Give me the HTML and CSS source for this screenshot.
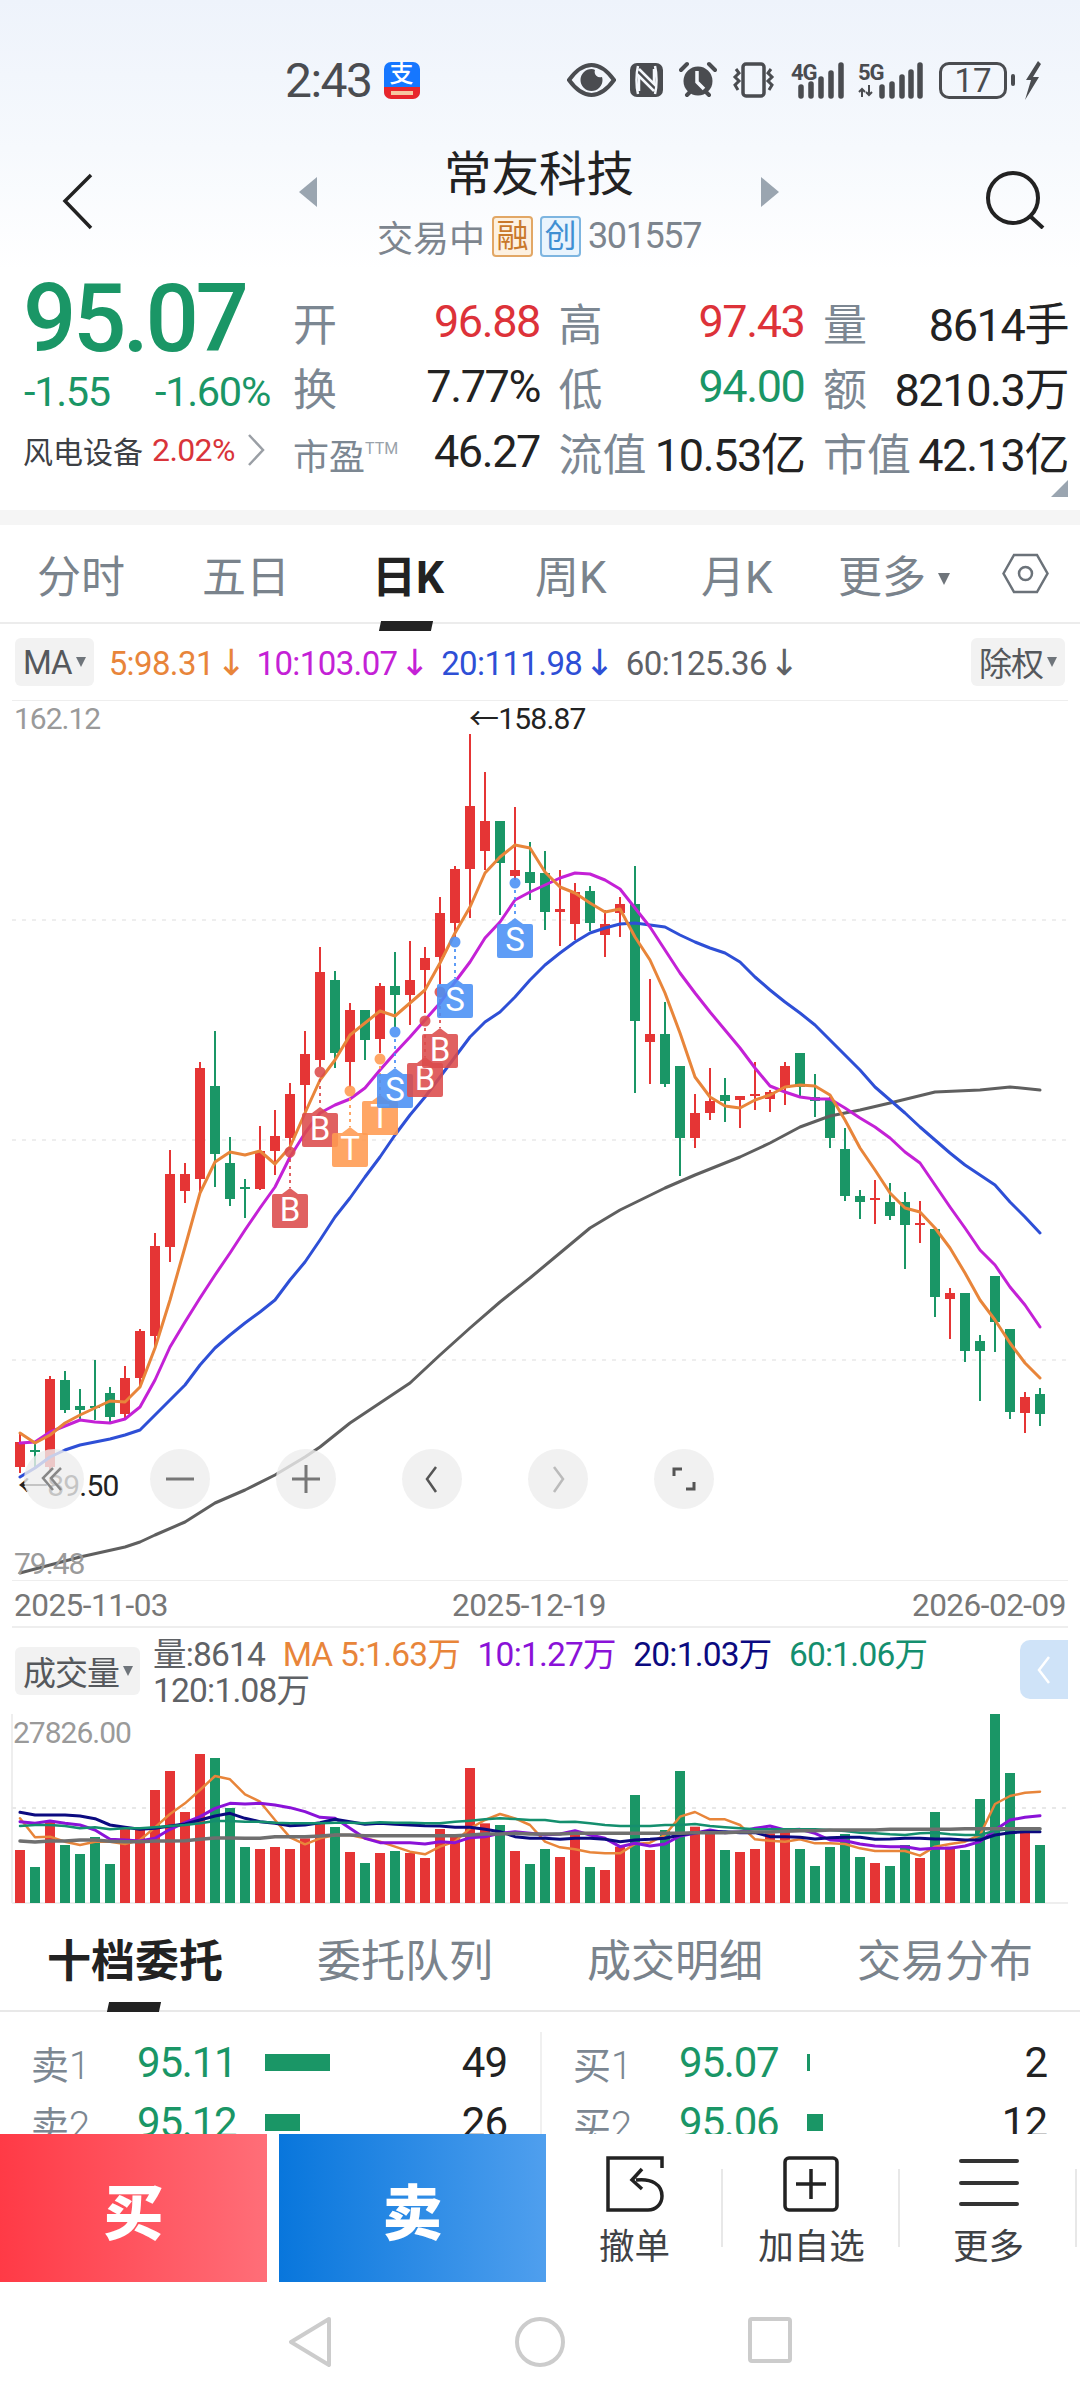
FILE: index.html
```html
<!DOCTYPE html>
<html lang="zh-CN">
<head>
  <meta charset="UTF-8">
  <title>常友科技 301557</title>
  <link rel="stylesheet" href="styles.css">
</head>
<body>

  <header class="top">
    <div class="status">
      <span class="clock">2:43</span>
      <span class="alipay"><b>支</b><i></i></span>
      <div class="status-icons">
        <svg width="49" height="34" viewBox="0 0 49 34"><path d="M2 17C10 6 17 2 24.500 2S39 6 47 17C39 28 32 32 24.500 32S10 28 2 17Z" fill="none" stroke="#4a4c50" stroke-width="4"/><path d="M24.500 6a11 11 0 1 0 11 11c0-1-.2-2-.5-3a5.500 5.500 0 0 1-7-7c-1-.7-2.300-1-3.500-1Z" fill="#4a4c50"/></svg>
        <svg class="ic-nfc" width="33" height="34" viewBox="0 0 33 34"><rect width="33" height="34" rx="7" fill="#4a4c50"/><path d="M8 3c-2 8-2 20 0 28M25 3c2 8 2 20 0 28M9 6l15 15V6M24 28L9 13v15" fill="none" stroke="#f4f7fc" stroke-width="2.500"/></svg>
        <svg class="ic-alarm" width="38" height="38" viewBox="0 0 38 38"><circle cx="19" cy="20" r="14.500" fill="#4a4c50"/><path d="M18 10v11l7 7" fill="none" stroke="#f4f7fc" stroke-width="3.500"/><path d="M2 9l6-6M36 9l-6-6M8 34l3-3M30 34l-3-3" stroke="#4a4c50" stroke-width="4" stroke-linecap="round"/></svg>
        <svg class="ic-vibrate" width="45" height="36" viewBox="0 0 45 36"><rect x="12" y="2" width="21" height="32" rx="3" fill="none" stroke="#4a4c50" stroke-width="3.500"/><path d="M5 7l3 4-4 4 4 4-4 4 3 5M40 7l-3 4 4 4-4 4 4 4-3 5" fill="none" stroke="#4a4c50" stroke-width="3"/></svg>
        <svg class="ic-signal" width="53" height="37" viewBox="0 0 53 37"><text x="0" y="18" class="net">4G</text><path d="M10 25v9M20 22v12M30 17v17M40 11v23M50 3v31" stroke="#4a4c50" stroke-width="5.500" stroke-linecap="round"/></svg>
        <svg class="ic-signal-5g" width="65" height="37" viewBox="0 0 65 37"><text x="0" y="18" class="net">5G</text><path d="M4 27v8M1 30l3-3 3 3M11 23v10M8 30l3 3 3-3" fill="none" stroke="#4a4c50" stroke-width="2"/><path d="M24 25v9M34 22v12M44 15v19M53 10v24M62 3v31" stroke="#4a4c50" stroke-width="5.500" stroke-linecap="round"/></svg>
        <span class="battery">17</span>
        <span class="battery-tip"></span>
        <svg class="ic-bolt" width="17" height="39" viewBox="0 0 17 39"><path d="M14 0L2 19h5L1 39 15 16H9L17 3Z" fill="#4a4c50"/></svg>
      </div>
    </div>

    <nav class="navbar">
      <svg class="nav-back" width="31" height="57" viewBox="0 0 31 57"><path d="M29 2L3 28l26 27" fill="none" stroke="#222" stroke-width="3.500"/></svg>
      <div class="stock">
        <span class="tri tri-left"></span>
        <div class="stock-name">
          <h1>常友科技</h1>
          <div class="stock-sub">
            <span>交易中</span>
            <span class="tag tag-orange">融</span>
            <span class="tag tag-blue">创</span>
            <span class="code">301557</span>
          </div>
        </div>
        <span class="tri tri-right"></span>
      </div>
      <svg class="nav-search" width="60" height="58" viewBox="0 0 60 58"><circle cx="28" cy="27" r="25" fill="none" stroke="#222" stroke-width="4"/><path d="M45 45l13 12" stroke="#222" stroke-width="4"/></svg>
    </nav>
  </header>

  <section class="quote">
    <div class="price-box">
      <div class="price">95.07</div>
      <div class="change"><span>-1.55</span><span>-1.60%</span></div>
      <div class="sector"><span>风电设备</span><em>2.02%</em>
        <svg width="18" height="34" viewBox="0 0 18 34"><path d="M2 2l14 15L2 32" fill="none" stroke="#9a9fa5" stroke-width="2.500"/></svg>
      </div>
    </div>
    <div class="stats">
      <div class="stat"><label>开</label><b class="up">96.88</b></div>
      <div class="stat"><label>高</label><b class="up">97.43</b></div>
      <div class="stat"><label>量</label><b>8614手</b></div>
      <div class="stat"><label>换</label><b>7.77%</b></div>
      <div class="stat"><label>低</label><b class="down">94.00</b></div>
      <div class="stat"><label>额</label><b>8210.3万</b></div>
      <div class="stat"><label class="small">市盈<sup>TTM</sup></label><b>46.27</b></div>
      <div class="stat"><label>流值</label><b>10.53亿</b></div>
      <div class="stat"><label>市值</label><b>42.13亿</b></div>
    </div>
    <span class="corner"></span>
  </section>

  <div class="strip"></div>

  <div class="period-tabs">
    <span>分时</span>
    <span>五日</span>
    <span class="active">日K</span>
    <span>周K</span>
    <span>月K</span>
    <span>更多<i class="caret"></i></span>
    <svg width="47" height="41" viewBox="0 0 47 41"><path d="M1.500 20.500L12 2h23l10.500 18.500L35 39H12Z" fill="none" stroke="#6b7279" stroke-width="2.500"/><circle cx="23.500" cy="20.500" r="6.500" fill="none" stroke="#6b7279" stroke-width="2.500"/></svg>
  </div>

  <div class="ma-row">
    <span class="pick">MA<i class="caret"></i></span>
    <span class="c-orange">5:98.31<i class="arrow">↓</i></span>
    <span class="c-magenta">10:103.07<i class="arrow">↓</i></span>
    <span class="c-blue">20:111.98<i class="arrow">↓</i></span>
    <span class="c-grey">60:125.36<i class="arrow">↓</i></span>
    <span class="pick pick-right">除权<i class="caret"></i></span>
  </div>

  <section class="kline">
    <svg id="kline" viewBox="0 700 1080 881" width="1080" height="881"></svg>
    <span class="axis axis-high">162.12</span>
    <span class="peak peak-high">←158.87</span>
    <span class="peak peak-low">←89.50</span>
    <span class="axis axis-low">79.48</span>
    <div class="zoom-btns">
      <button><svg width="30" height="30" viewBox="0 0 30 30"><path d="M14 4L4 14l10 12M22 4L12 14l10 12" fill="none" stroke="#888" stroke-width="2.500"/></svg></button>
      <button><svg width="30" height="30" viewBox="0 0 30 30"><path d="M1 15h28" stroke="#777" stroke-width="3"/></svg></button>
      <button><svg width="30" height="30" viewBox="0 0 30 30"><path d="M1 15h28M15 1v28" stroke="#777" stroke-width="3"/></svg></button>
      <button><svg width="30" height="30" viewBox="0 0 30 30"><path d="M19 3L10 15l9 13" fill="none" stroke="#555" stroke-width="2.500"/></svg></button>
      <button><svg width="30" height="30" viewBox="0 0 30 30"><path d="M11 3l9 12-9 13" fill="none" stroke="#bbb" stroke-width="2.500"/></svg></button>
      <button><svg width="30" height="30" viewBox="0 0 30 30"><path d="M5 12V5h8M25 18v7h-8" fill="none" stroke="#555" stroke-width="3"/></svg></button>
    </div>
  </section>

  <div class="dates">
    <span>2025-11-03</span>
    <span>2025-12-19</span>
    <span>2026-02-09</span>
  </div>

  <section class="volume">
    <div class="vol-head">
      <span class="pick vol-pick">成交量<i class="caret"></i></span>
      <div class="vol-legend">
        <span class="c-grey">量:8614</span>
        <span class="c-orange">MA 5:1.63万</span>
        <span class="c-purple">10:1.27万</span>
        <span class="c-navy">20:1.03万</span>
        <span class="c-teal">60:1.06万</span>
        <span class="c-grey">120:1.08万</span>
      </div>
      <span class="vol-toggle"><svg width="16" height="30" viewBox="0 0 16 30"><path d="M13 2L3 15l10 13" fill="none" stroke="#fff" stroke-width="2.500"/></svg></span>
    </div>
    <div class="vol-chart">
      <svg id="volume" viewBox="0 1710 1080 196" width="1080" height="196"></svg>
      <span class="axis axis-vol">27826.00</span>
    </div>
  </section>

  <div class="book-tabs">
    <span class="active">十档委托</span>
    <span>委托队列</span>
    <span>成交明细</span>
    <span>交易分布</span>
  </div>

  <section class="book">
    <div class="book-side">
      <div class="book-row"><span class="lv">卖<i>1</i></span><span class="px">95.11</span><span class="bar" style="width:65px"></span><span class="qty">49</span></div>
      <div class="book-row"><span class="lv">卖<i>2</i></span><span class="px">95.12</span><span class="bar" style="width:35px"></span><span class="qty">26</span></div>
    </div>
    <div class="book-side">
      <div class="book-row"><span class="lv">买<i>1</i></span><span class="px">95.07</span><span class="bar" style="width:3px"></span><span class="qty">2</span></div>
      <div class="book-row"><span class="lv">买<i>2</i></span><span class="px">95.06</span><span class="bar" style="width:16px"></span><span class="qty">12</span></div>
    </div>
  </section>

  <div class="actions">
    <button class="trade buy">买</button>
    <button class="trade sell">卖</button>
    <div class="tool">
      <svg width="58" height="56" viewBox="0 0 58 56"><path d="M56 12V2H2v52h40c8 0 14-6 14-14 0-11-10-18-26-16" fill="none" stroke="#222" stroke-width="3.500"/><path d="M36 13L26 24l10 9" fill="none" stroke="#222" stroke-width="3.500"/></svg>
      <span>撤单</span>
    </div>
    <div class="tool">
      <svg width="58" height="56" viewBox="0 0 58 56"><rect x="2" y="2" width="52" height="52" rx="4" fill="none" stroke="#222" stroke-width="3.500"/><path d="M13 28h30M28 13v30" stroke="#222" stroke-width="3.500"/></svg>
      <span>加自选</span>
    </div>
    <div class="tool">
      <svg width="60" height="56" viewBox="0 0 60 56"><path d="M2 5h56M2 27h56M2 48h56" stroke="#333" stroke-width="4" stroke-linecap="round"/></svg>
      <span>更多</span>
    </div>
  </div>

  <div class="sysnav">
    <svg width="44" height="50" viewBox="0 0 44 50"><path d="M41 2L3 25l38 23Z" fill="none" stroke="#ccc" stroke-width="4" stroke-linejoin="round"/></svg>
    <svg width="50" height="50" viewBox="0 0 50 50"><circle cx="25" cy="25" r="23" fill="none" stroke="#ccc" stroke-width="4"/></svg>
    <svg width="44" height="46" viewBox="0 0 44 46"><rect x="2" y="2" width="40" height="42" rx="2" fill="none" stroke="#ccc" stroke-width="4"/></svg>
  </div>

  <script src="chart.js"></script>
</body>
</html>
```

FILE: styles.css
```css
* { box-sizing: border-box; }
html, body { margin: 0; padding: 0; }
body {
  width: 1080px;
  height: 2400px;
  overflow: hidden;
  background: #fff;
  color: #222;
  font-family: Roboto, "Noto Sans CJK SC", sans-serif;
}
i { font-style: normal; }
button {
  border: none;
  padding: 0;
  font-family: inherit;
}

.c-orange { color: #e8853a; }
.c-magenta { color: #c421d6; }
.c-blue { color: #2e4fd6; }
.c-grey { color: #5f6266; }
.c-purple { color: #8a12d8; }
.c-navy { color: #0b0a80; }
.c-teal { color: #148f6e; }
.up { color: #dd3239; }
.down { color: #1a9666; }

.caret {
  display: inline-block;
  width: 0;
  height: 0;
  border-left: 6px solid transparent;
  border-right: 6px solid transparent;
  border-top: 12px solid #6f757b;
}

/* top gradient + status */
.top {
  height: 270px;
  background: linear-gradient(#eef3fb, #f6f9fd 55%, #fff);
}
.status {
  height: 120px;
  display: flex;
  align-items: center;
  padding: 40px 39px 0 285px;
  color: #4a4c50;
}
.clock {
  font-size: 48px;
  letter-spacing: -1.500px;
}
.alipay {
  width: 36px;
  height: 36px;
  margin-left: 12px;
  border-radius: 7px;
  background: #1677ff;
  display: flex;
  flex-direction: column;
  align-items: center;
}
.alipay b {
  height: 25px;
  color: #fff;
  font-size: 24px;
  line-height: 25px;
  font-weight: 500;
}
.alipay i {
  width: 100%;
  flex: 1;
  border-radius: 0 0 7px 7px;
  background: #e8262b;
  padding: 4px 7px;
}
.alipay i::after {
  content: "";
  display: block;
  height: 4px;
  background: #f6c7a0;
}
.status-icons {
  margin-left: auto;
  display: flex;
  align-items: center;
}
.ic-nfc { margin-left: 14px; }
.ic-alarm { margin-left: 16px; }
.ic-vibrate { margin-left: 14px; }
.ic-signal { margin-left: 15px; }
.ic-signal-5g { margin-left: 14px; }
.net {
  font-size: 22px;
  font-weight: 700;
  fill: #4a4c50;
  letter-spacing: -1px;
}
.battery {
  width: 68px;
  height: 37px;
  margin-left: 16px;
  border: 3px solid #4a4c50;
  border-radius: 10px;
  font-size: 33px;
  line-height: 31px;
  text-align: center;
}
.battery-tip {
  width: 4px;
  height: 12px;
  margin-left: 4px;
  border-radius: 2px;
  background: #4a4c50;
}
.ic-bolt { margin-left: 9px; }

.navbar {
  height: 150px;
  display: flex;
  justify-content: space-between;
  align-items: flex-start;
  padding: 0 35px 0 62px;
}
.nav-back { margin-top: 53px; }
.nav-search { margin-top: 51px; }
.stock {
  width: 480px;
  display: flex;
  justify-content: space-between;
  align-items: flex-start;
}
.tri {
  margin-top: 57px;
  width: 0;
  height: 0;
  border-top: 15px solid transparent;
  border-bottom: 15px solid transparent;
}
.tri-left { border-right: 18px solid #9aa5b0; }
.tri-right { border-left: 18px solid #9aa5b0; }
.stock-name {
  padding-top: 25px;
  text-align: center;
}
.stock-name h1 {
  margin: 0;
  font-size: 47.500px;
  line-height: 60px;
  font-weight: 400;
  color: #222;
}
.stock-sub {
  margin-top: 5px;
  height: 52px;
  display: flex;
  align-items: center;
  justify-content: center;
  gap: 7px;
  font-size: 36px;
  color: #7d858e;
}
.tag {
  width: 41px;
  height: 41px;
  border-radius: 4px;
  font-size: 32px;
  line-height: 37px;
  text-align: center;
}
.tag-orange {
  color: #c9782b;
  background: #fdf1e1;
  border: 2px solid #e2a765;
}
.tag-blue {
  color: #3f8fd2;
  background: #e9f4fd;
  border: 2px solid #7db5e0;
}
.code {
  font-size: 36px;
  letter-spacing: -1.400px;
}

/* quote block */
.quote {
  position: relative;
  height: 240px;
  display: flex;
}
.price-box {
  width: 295px;
  padding: 9px 0 0 23px;
}
.price {
  color: #1a9666;
  font-size: 94px;
  line-height: 80px;
  font-weight: 500;
  letter-spacing: -3.500px;
}
.change {
  margin-top: 7px;
  height: 50px;
  display: flex;
  align-items: center;
  color: #1a9666;
  font-size: 41.500px;
  letter-spacing: -1.300px;
}
.change span:first-child {
  width: 131px;
  margin-left: 1px;
}
.sector {
  margin-top: 9px;
  height: 50px;
  display: flex;
  align-items: center;
  font-size: 30px;
  color: #3d4045;
}
.sector em {
  margin-left: 9px;
  font-style: normal;
  color: #d9343a;
  font-size: 32px;
  letter-spacing: -.6px;
}
.sector svg { margin-left: 12px; }
.stats {
  flex: 1;
  padding: 19px 0 0;
  display: grid;
  grid-template-columns: 245px 244px 243px;
  grid-auto-rows: 65px;
  column-gap: 20.500px;
  align-content: start;
}
.stat {
  display: flex;
  justify-content: space-between;
  align-items: center;
  white-space: nowrap;
}
.stat label {
  margin-left: -2px;
  font-size: 44px;
  color: #7c8792;
}
.stat label.small {
  font-size: 36px;
  margin-top: 4px;
}
.stat sup {
  font-size: 16px;
  vertical-align: 16px;
  line-height: 0;
  color: #9aa2aa;
}
.stat b {
  font-size: 45px;
  font-weight: 400;
  letter-spacing: -1.400px;
}
.corner {
  position: absolute;
  right: 12px;
  bottom: 13px;
  border-left: 17px solid transparent;
  border-bottom: 17px solid #9aa5b0;
}

.strip {
  height: 15px;
  background: #f5f5f5;
}

/* period tabs */
.period-tabs {
  height: 99px;
  padding-left: 37px;
  display: grid;
  grid-template-columns: 165px 170px 163px 166px 137px 164px auto;
  align-items: center;
  border-bottom: 2px solid #ececec;
  font-size: 44px;
  color: #7a838c;
}
.period-tabs span { position: relative; }
.period-tabs .caret {
  margin-left: 12px;
  vertical-align: 8px;
}
.period-tabs .active {
  color: #222;
  font-weight: 700;
}
.period-tabs .active::after {
  content: "";
  position: absolute;
  left: 8px;
  bottom: -25px;
  width: 52px;
  height: 10px;
  background: #222;
  transform: skewX(-12deg);
}

/* MA row */
.ma-row {
  height: 76px;
  padding: 0 15px;
  display: flex;
  align-items: center;
  font-size: 33px;
  letter-spacing: -.6px;
  white-space: nowrap;
}
.ma-row > span { margin-left: 12px; }
.ma-row > span:first-child { margin-left: 0; }
.ma-row > span:nth-child(2) { margin-left: 15px; }
.ma-row > span:nth-child(3) { margin-left: 11px; }
.arrow {
  font-family: "DejaVu Sans", sans-serif;
  font-size: 36px;
  margin-left: 2px;
}
.pick {
  height: 48px;
  padding: 0 8px;
  border-radius: 6px;
  background: #f2f2f2;
  color: #55585c;
  font-size: 33px;
  letter-spacing: -1px;
  display: inline-flex;
  align-items: center;
  gap: 4px;
}
.pick .caret {
  border-left-width: 5px;
  border-right-width: 5px;
  border-top-width: 10px;
}
.ma-row .pick-right { margin-left: auto; }

/* chart */
.kline {
  position: relative;
  height: 881px;
}
.kline svg, .vol-chart svg { display: block; }
.axis {
  position: absolute;
  left: 14px;
  font-size: 30px;
  line-height: 30px;
  letter-spacing: -1px;
  color: #9a9a9a;
}
.axis-high { top: 4px; }
.axis-low { top: 849px; }
.peak {
  position: absolute;
  font-size: 30px;
  line-height: 30px;
  letter-spacing: -.8px;
  color: #222;
}
.peak-high { left: 469px; top: 4px; }
.peak-low { left: 18px; top: 771px; }
.zoom-btns {
  position: absolute;
  left: 24px;
  top: 749px;
  display: flex;
  gap: 66px;
}
.zoom-btns button {
  width: 60px;
  height: 60px;
  border-radius: 50%;
  background: rgba(238, 238, 238, .8);
  display: flex;
  align-items: center;
  justify-content: center;
}
.marker-text {
  font-family: Roboto, sans-serif;
  font-size: 33px;
  fill: #fff;
  text-anchor: middle;
}

.dates {
  height: 47px;
  margin: 0 12px;
  padding: 3px 2px 0 2px;
  display: flex;
  justify-content: space-between;
  align-items: center;
  border-bottom: 2px solid #eee;
  font-size: 31.500px;
  letter-spacing: -.5px;
  color: #777;
}
.dates span:nth-child(2) { margin-right: 22px; }

/* volume */
.volume { height: 277px; }
.vol-head {
  height: 82px;
  padding: 9px 12px 0 15px;
  display: flex;
  align-items: flex-start;
}
.vol-pick {
  width: 125px;
  margin-top: 10px;
  flex: none;
  white-space: nowrap;
}
.vol-legend {
  width: 860px;
  margin-left: 13px;
  display: flex;
  flex-wrap: wrap;
  column-gap: 17.500px;
  font-size: 33.500px;
  line-height: 36px;
  letter-spacing: -.8px;
  white-space: nowrap;
}
.vol-toggle {
  width: 48px;
  height: 59px;
  margin-top: 3px;
  margin-left: auto;
  border-radius: 10px 0 0 10px;
  background: #cfe3f8;
  display: flex;
  align-items: center;
  justify-content: center;
}
.vol-chart { position: relative; }
.axis-vol { left: 13px; top: 8px; }

/* order book */
.book-tabs {
  height: 107px;
  display: grid;
  grid-template-columns: 47px 270px 270px 270px auto;
  align-items: center;
  border-bottom: 2px solid #e8e8e8;
  font-size: 44px;
  color: #7a838c;
}
.book-tabs span:first-child { grid-column: 2; }
.book-tabs span { position: relative; }
.book-tabs .active {
  color: #222;
  font-weight: 700;
}
.book-tabs .active::after {
  content: "";
  position: absolute;
  left: 61px;
  bottom: -22px;
  width: 52px;
  height: 10px;
  background: #222;
  transform: skewX(-12deg);
}
.book {
  height: 122px;
  overflow: hidden;
  display: flex;
}
.book-side {
  width: 540px;
  padding: 20px 33px 0 31px;
}
.book-side:last-child {
  padding-left: 31px;
  border-left: 2px solid #f0f0f0;
  margin-top: 20px;
  padding-top: 0;
}
.book-row {
  height: 60px;
  display: flex;
  align-items: center;
}
.lv {
  width: 106px;
  font-size: 38px;
  color: #7c8792;
}
.lv i { font-weight: 300; }
.px {
  width: 128px;
  font-size: 42px;
  letter-spacing: -1.200px;
  color: #1a9666;
}
.bar {
  height: 17px;
  background: #1a9666;
}
.qty {
  margin-left: auto;
  font-size: 42px;
  letter-spacing: -1px;
  color: #222;
}

/* bottom bar */
.actions {
  height: 148px;
  display: flex;
  background: #fff;
}
.trade {
  width: 267px;
  color: #fff;
  font-size: 60px;
  font-weight: 900;
}
.buy { background: linear-gradient(90deg, #ff3a46, #ff6e78); }
.sell {
  margin-left: 12px;
  background: linear-gradient(90deg, #0876dc, #4f9fee);
}
.tool {
  position: relative;
  width: 177px;
  padding-top: 22px;
  display: flex;
  flex-direction: column;
  align-items: center;
  font-size: 35.500px;
  line-height: 44px;
  color: #3f4246;
}
.tool span { margin-top: 13px; }
.tool::after {
  content: "";
  position: absolute;
  right: 0;
  top: 35px;
  width: 2px;
  height: 78px;
  background: #e8e8e8;
}

.sysnav {
  height: 118px;
  padding-top: 35px;
  display: flex;
  justify-content: center;
  align-items: flex-start;
  gap: 183px;
}
```

FILE: chart.js
```js
// x of bar i, both charts share the same 15px step
const barX = i => 20 + 15 * i;

const RED = "#e53535";
const GREEN = "#1a9666";

// wick top, body top, body bottom, wick bottom, colour (page y)
const candles = [
  [1434,1442,1467,1473,"r"],[1443,1450,1452,1467,"g"],[1376,1379,1467,1470,"r"],[1371,1380,1410,1413,"g"],
  [1389,1406,1410,1420,"g"],[1360,1406,1408,1420,"g"],[1387,1393,1417,1422,"g"],[1366,1378,1414,1418,"r"],
  [1329,1331,1378,1387,"r"],[1233,1246,1336,1347,"r"],[1150,1174,1247,1262,"r"],[1163,1174,1191,1203,"r"],
  [1062,1068,1179,1193,"r"],[1031,1086,1154,1187,"g"],[1137,1163,1199,1206,"g"],[1179,1187,1189,1218,"g"],
  [1126,1151,1189,1190,"r"],[1110,1136,1151,1175,"r"],[1083,1094,1138,1150,"r"],[1031,1054,1085,1113,"r"],
  [947,972,1060,1067,"r"],[971,980,1053,1068,"g"],[1003,1010,1062,1087,"r"],[1010,1010,1040,1060,"g"],
  [983,986,1039,1053,"r"],[952,986,995,1027,"g"],[941,980,995,1025,"r"],[947,958,970,1013,"r"],
  [897,913,957,984,"r"],[866,869,923,937,"r"],[734,806,869,918,"r"],[772,821,851,870,"r"],
  [821,821,863,915,"g"],[807,870,876,880,"r"],[842,872,883,900,"g"],[851,873,912,930,"g"],
  [870,909,912,946,"r"],[883,892,924,940,"r"],[886,891,923,931,"g"],[910,924,935,957,"r"],
  [897,904,913,937,"r"],[866,904,1021,1093,"g"],[979,1034,1042,1084,"r"],[1002,1034,1084,1087,"g"],
  [1066,1066,1138,1176,"g"],[1094,1113,1138,1148,"r"],[1068,1101,1113,1120,"r"],[1078,1095,1101,1122,"g"],
  [1096,1096,1100,1128,"r"],[1062,1094,1096,1110,"r"],[1090,1092,1099,1112,"r"],[1062,1066,1088,1105,"r"],
  [1053,1053,1087,1097,"g"],[1074,1097,1101,1117,"g"],[1097,1100,1138,1148,"g"],[1128,1149,1196,1201,"g"],
  [1190,1196,1202,1219,"g"],[1180,1198,1200,1224,"r"],[1183,1202,1216,1220,"g"],[1192,1202,1225,1269,"g"],
  [1201,1223,1225,1243,"r"],[1229,1229,1297,1317,"g"],[1288,1293,1299,1339,"r"],[1293,1293,1351,1362,"g"],
  [1335,1341,1351,1401,"g"],[1276,1276,1322,1352,"g"],[1329,1329,1412,1419,"g"],[1392,1397,1413,1433,"r"],
  [1388,1394,1414,1426,"g"]
];

const ma5 = [1433,1443,1435,1423,1415,1408,1401,1402,1387,1348,1300,1247,1193,1162,1152,1155,1151,1164,1147,1113,1080,1060,1035,1023,1011,1016,1003,990,963,933,907,873,857,845,848,872,887,893,903,912,909,937,960,993,1033,1077,1097,1106,1108,1100,1095,1087,1085,1086,1095,1120,1148,1170,1193,1208,1212,1228,1248,1273,1300,1320,1343,1363,1378];
const ma10 = [1443,1442,1432,1426,1420,1422,1423,1419,1407,1380,1347,1322,1298,1275,1253,1230,1208,1187,1157,1133,1113,1105,1099,1088,1070,1053,1037,1020,1003,982,962,938,922,900,892,885,878,873,874,880,889,908,927,950,973,993,1012,1030,1048,1068,1086,1092,1097,1099,1099,1108,1118,1127,1138,1152,1163,1185,1207,1228,1250,1265,1287,1305,1327];
const ma20 = [1477,1468,1457,1450,1445,1442,1439,1435,1430,1415,1400,1385,1365,1348,1335,1323,1312,1300,1280,1262,1240,1217,1198,1177,1157,1135,1115,1097,1077,1057,1037,1022,1012,997,980,965,953,942,933,928,924,923,925,927,935,942,948,953,962,977,990,1002,1013,1025,1040,1055,1070,1087,1100,1113,1127,1140,1153,1165,1175,1185,1202,1217,1233];
// index, y
const ma60 = [[0,1573],[2,1565],[4,1557],[7,1547],[8,1542],[9,1535],[11,1522],[13,1503],[15,1490],[17,1475],[19,1457],[20,1447],[22,1423],[24,1403],[26,1383],[28,1355],[30,1328],[32,1302],[34,1278],[36,1253],[38,1228],[40,1210],[43,1188],[45,1175],[48,1157],[50,1143],[52,1127],[54,1116],[56,1110],[58,1103],[61,1092],[64,1090],[66,1087],[68,1090]];

// bar tops, in thirds of a pixel below y=1740; bottom sits on 1903
const volTops = [330,381,245,315,342,291,372,265,270,150,93,216,42,54,204,321,327,321,327,295,250,261,336,369,339,333,339,354,267,285,84,250,255,333,372,327,351,285,381,390,320,165,330,270,93,260,270,330,336,327,280,275,327,378,321,282,351,369,378,315,354,216,320,330,177,-78,99,270,315];
const greenBars = new Set([1,3,4,5,6,13,14,15,21,23,25,32,34,35,38,41,43,44,47,52,53,54,55,56,58,59,61,63,64,65,66,68]);

const volLines = [
  { color: "#e8853a", w: 2.5, pts: [235,292,290,305,315,305,305,312,300,262,222,190,150,108,118,163,185,240,292,313,295,285,285,295,305,320,335,343,320,305,265,240,222,235,255,305,322,328,337,340,340,312,308,285,230,216,238,238,255,298,302,305,298,310,310,312,325,333,333,333,347,320,312,305,285,192,168,158,155] },
  { color: "#8a12d8", w: 3, pts: [245,250,243,250,255,270,298,300,303,295,268,248,230,205,190,192,190,195,203,215,232,235,265,295,308,308,308,312,305,308,293,290,280,275,280,285,282,272,285,295,320,310,318,312,288,280,270,278,275,265,258,270,268,280,300,302,312,318,320,320,328,325,325,318,305,270,240,232,227] },
  { color: "#0b0a80", w: 3, pts: [217,225,225,225,228,236,255,262,268,265,258,252,240,228,220,235,245,250,257,255,248,238,245,253,250,253,255,257,258,262,262,268,275,290,295,295,298,295,295,298,305,300,298,295,285,278,275,275,278,278,290,290,292,297,293,292,292,298,297,295,295,297,297,300,300,285,278,275,275] },
  { color: "#148f6e", w: 2.5, pts: [258,255,255,258,265,262,268,265,265,262,258,255,250,243,243,245,245,248,250,250,250,248,248,250,247,248,248,250,250,245,242,238,235,237,240,240,246,245,250,255,258,258,258,255,255,252,258,262,265,268,268,268,268,268,270,273,278,280,283,285,280,278,283,285,285,272,268,268,268] },
  { color: "#6f6f6f", w: 3.5, pts: [303,306,303,303,300,300,304,305,305,303,303,302,298,294,294,295,295,290,290,290,288,285,285,287,287,287,287,287,287,287,285,282,282,280,282,282,282,280,280,280,280,280,280,280,280,278,278,278,276,276,276,274,272,272,270,270,270,270,268,268,268,268,268,266,266,266,266,266,266] }
];

const markers = [
  { t: "B", x: 290, y: 1188, dot: 1152 },
  { t: "B", x: 320, y: 1107, dot: 1072 },
  { t: "T", x: 350, y: 1127, dot: 1091 },
  { t: "T", x: 380, y: 1095, dot: 1059 },
  { t: "S", x: 395, y: 1068, dot: 1032 },
  { t: "B", x: 425, y: 1057, dot: 1021 },
  { t: "B", x: 440, y: 1028, dot: 992 },
  { t: "S", x: 455, y: 978, dot: 942 },
  { t: "S", x: 515, y: 918, dot: 883 }
];
const markerColor = { B: "#dc4c4c", T: "#ff9a50", S: "#4a90f5" };

const polyline = (pts, color, w) =>
  `<polyline points="${pts}" fill="none" stroke="${color}" stroke-width="${w}" stroke-linejoin="round" stroke-linecap="round"/>`;
const hLine = (y, color, dash) =>
  `<line x1="12" x2="1068" y1="${y}" y2="${y}" stroke="${color}" stroke-width="2"${dash ? ' stroke-dasharray="4 6"' : ""}/>`;

let k = hLine(700, "#eeeeee") + hLine(1581, "#eeeeee");
[920, 1140, 1360].forEach(y => { k += hLine(y, "#eeeeee", true); });

candles.forEach((c, i) => {
  const x = barX(i);
  const col = c[4] === "r" ? RED : GREEN;
  k += `<rect x="${x - 1}" y="${c[0]}" width="2" height="${c[3] - c[0]}" fill="${col}"/>`;
  k += `<rect x="${x - 5}" y="${c[1]}" width="10" height="${Math.max(c[2] - c[1], 2)}" fill="${col}"/>`;
});

const byIndex = arr => arr.map((y, i) => `${barX(i)},${y}`).join(" ");
k += polyline(ma60.map(p => `${barX(p[0])},${p[1]}`).join(" "), "#5f5f5f", 3);
k += polyline(byIndex(ma20), "#2e4fd6", 3);
k += polyline(byIndex(ma10), "#c421d6", 3);
k += polyline(byIndex(ma5), "#e8853a", 3);

markers.forEach(m => {
  const col = markerColor[m.t];
  k += `<g opacity=".88">`;
  k += `<line x1="${m.x}" x2="${m.x}" y1="${m.dot}" y2="${m.y}" stroke="${col}" stroke-width="2" stroke-dasharray="3 4"/>`;
  k += `<circle cx="${m.x}" cy="${m.dot}" r="5.5" fill="${col}"/>`;
  k += `<path d="M${m.x} ${m.y}l8 6h8a2 2 0 0 1 2 2v30a2 2 0 0 1-2 2h-32a2 2 0 0 1-2-2v-30a2 2 0 0 1 2-2h8Z" fill="${col}"/>`;
  k += `</g><text class="marker-text" x="${m.x}" y="${m.y + 33}">${m.t}</text>`;
});
document.getElementById("kline").innerHTML = k;

const volY = v => 1740 + v / 3;
let vol = `<line x1="12" x2="12" y1="1714" y2="1903" stroke="#eeeeee" stroke-width="2"/>`;
vol += hLine(1903, "#eeeeee") + hLine(1808, "#e8e8e8", true);
volTops.forEach((v, i) => {
  const col = greenBars.has(i) ? GREEN : RED;
  vol += `<rect x="${barX(i) - 5}" y="${volY(v)}" width="10" height="${1903 - volY(v)}" fill="${col}"/>`;
});
volLines.forEach(l => {
  vol += polyline(l.pts.map((v, i) => `${barX(i)},${volY(v)}`).join(" "), l.color, l.w);
});
document.getElementById("volume").innerHTML = vol;
```
